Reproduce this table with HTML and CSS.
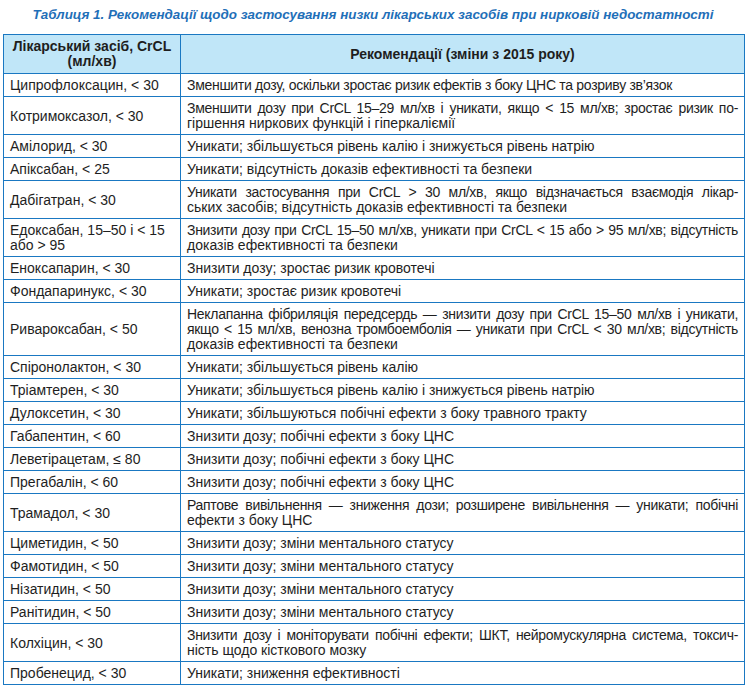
FILE: index.html
```html
<!DOCTYPE html>
<html lang="uk">
<head>
<meta charset="utf-8">
<link rel="stylesheet" href="styles.css">
</head>
<body>
<div class="page">
  <h1 class="caption">Таблиця 1. Рекомендації щодо застосування низки лікарських засобів при нирковій недостатності</h1>
  <table class="tbl">
    <colgroup><col class="c1"><col class="c2"></colgroup>
    <thead>
      <tr><th>Лікарський засіб, CrCL<br>(мл/хв)</th><th>Рекомендації (зміни з 2015 року)</th></tr>
    </thead>
    <tbody>
      <tr><td>Ципрофлоксацин, &lt; 30</td><td class="tight">Зменшити дозу, оскільки зростає ризик ефектів з боку ЦНС та розриву зв’язок</td></tr>
      <tr><td>Котримоксазол, &lt; 30</td><td><span class="jl">Зменшити дозу при CrCL 15–29 мл/хв і уникати, якщо &lt; 15 мл/хв; зростає ризик по-</span>гіршення ниркових функцій і гіперкаліємії</td></tr>
      <tr><td>Амілорид, &lt; 30</td><td>Уникати; збільшується рівень калію і знижується рівень натрію</td></tr>
      <tr><td>Апіксабан, &lt; 25</td><td>Уникати; відсутність доказів ефективності та безпеки</td></tr>
      <tr><td>Дабігатран, &lt; 30</td><td><span class="jl">Уникати застосування при CrCL &gt; 30 мл/хв, якщо відзначається взаємодія лікар-</span>ських засобів; відсутність доказів ефективності та безпеки</td></tr>
      <tr><td>Едоксабан, 15–50 і &lt; 15<br>або &gt; 95</td><td><span class="jl">Знизити дозу при CrCL 15–50 мл/хв, уникати при CrCL &lt; 15 або &gt; 95 мл/хв; відсутність</span>доказів ефективності та безпеки</td></tr>
      <tr><td>Еноксапарин, &lt; 30</td><td>Знизити дозу; зростає ризик кровотечі</td></tr>
      <tr><td>Фондапаринукс, &lt; 30</td><td>Уникати; зростає ризик кровотечі</td></tr>
      <tr><td>Ривароксабан, &lt; 50</td><td><span class="jl">Неклапанна фібриляція передсердь — знизити дозу при CrCL 15–50 мл/хв і уникати,</span><span class="jl">якщо &lt; 15 мл/хв, венозна тромбоемболія — уникати при CrCL &lt; 30 мл/хв; відсутність</span>доказів ефективності та безпеки</td></tr>
      <tr><td>Спіронолактон, &lt; 30</td><td>Уникати; збільшується рівень калію</td></tr>
      <tr><td>Тріамтерен, &lt; 30</td><td>Уникати; збільшується рівень калію і знижується рівень натрію</td></tr>
      <tr><td>Дулоксетин, &lt; 30</td><td>Уникати; збільшуються побічні ефекти з боку травного тракту</td></tr>
      <tr><td>Габапентин, &lt; 60</td><td>Знизити дозу; побічні ефекти з боку ЦНС</td></tr>
      <tr><td>Леветірацетам, ≤ 80</td><td>Знизити дозу; побічні ефекти з боку ЦНС</td></tr>
      <tr><td>Прегабалін, &lt; 60</td><td>Знизити дозу; побічні ефекти з боку ЦНС</td></tr>
      <tr><td>Трамадол, &lt; 30</td><td><span class="jl">Раптове вивільнення — зниження дози; розширене вивільнення — уникати; побічні</span>ефекти з боку ЦНС</td></tr>
      <tr><td>Циметидин, &lt; 50</td><td>Знизити дозу; зміни ментального статусу</td></tr>
      <tr><td>Фамотидин, &lt; 50</td><td>Знизити дозу; зміни ментального статусу</td></tr>
      <tr><td>Нізатидин, &lt; 50</td><td>Знизити дозу; зміни ментального статусу</td></tr>
      <tr><td>Ранітидин, &lt; 50</td><td>Знизити дозу; зміни ментального статусу</td></tr>
      <tr><td>Колхіцин, &lt; 30</td><td><span class="jl">Знизити дозу і моніторувати побічні ефекти; ШКТ, нейромускулярна система, токсич-</span>ність щодо кісткового мозку</td></tr>
      <tr><td>Пробенецид, &lt; 30</td><td>Уникати; зниження ефективності</td></tr>
    </tbody>
  </table>
</div>
</body>
</html>
```

FILE: styles.css
```css
html, body {
  margin: 0;
  padding: 0;
  background: #ffffff;
}
.page {
  padding: 6px 5px 0 3px;
  font-family: "Liberation Sans", Arial, sans-serif;
  color: #1e1e1e;
}
.caption {
  margin: 0 0 10px 0;
  font-size: 13.4px;
  line-height: 18px;
  font-weight: bold;
  font-style: italic;
  color: #1f6fb8;
  text-align: center;
}
.tbl {
  width: 741px;
  border-collapse: collapse;
  table-layout: fixed;
  font-size: 14px;
  line-height: 15px;
}
.c1 { width: 177px; }
.c2 { width: 564px; }
.tbl th, .tbl td {
  border: 1px solid #1a78c2;
  padding: 4px 6px 3px 6px;
  vertical-align: middle;
}
.tbl th {
  background: #c0e6f8;
  font-weight: bold;
  text-align: center;
  padding: 4px 6px 4px 6px;
}
.tbl td {
  text-align: left;
}
.jl {
  display: block;
  white-space: nowrap;
  text-align: justify;
  text-align-last: justify;
  letter-spacing: -0.3px;
}
.tight {
  letter-spacing: -0.3px;
}
```
